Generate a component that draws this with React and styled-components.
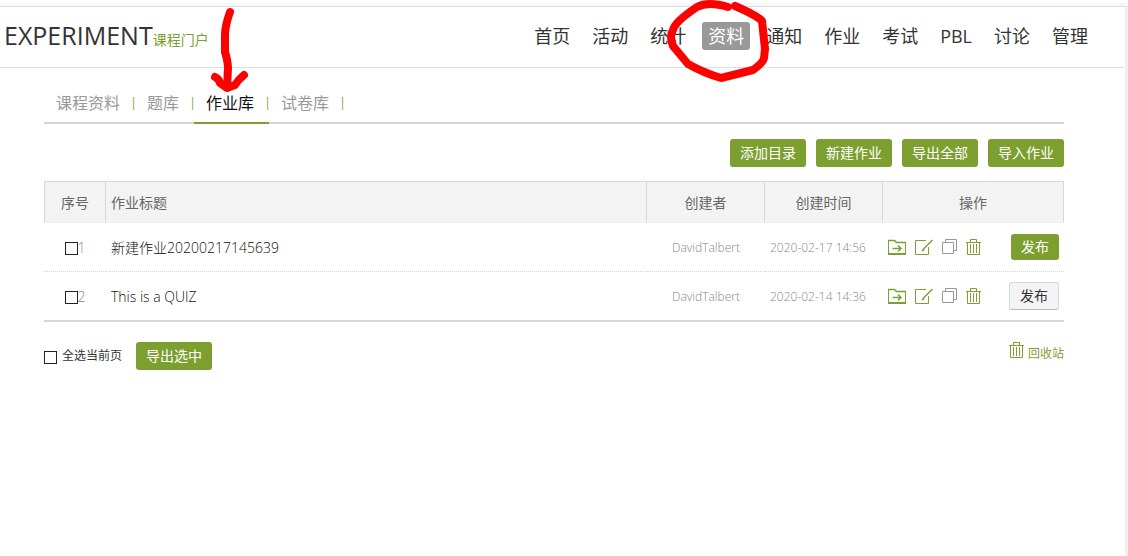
import React, { useState } from "react";
import styled, { createGlobalStyle, css } from "styled-components";

const GlobalStyle = createGlobalStyle`
  * {
    box-sizing: border-box;
  }

  html {
    min-height: 100%;
    background: linear-gradient(#fff 3px, #f7f7f7 3px, #f7f7f7 6px, #fff 6px);
  }

  body {
    margin: 0;
    font-family: "Open Sans", "Noto Sans CJK SC", sans-serif;
    font-size: 14px;
    font-weight: 400;
    color: #333;
  }

  button,
  input {
    font-family: inherit;
    font-weight: inherit;
  }
`;

const Page = styled.div`
  min-height: calc(100vh - 6px);
  margin-top: 6px;
  border-top: 1px solid #ddd;
  border-right: 3px solid #efefef;
  background-color: #fff;
`;

const Header = styled.header`
  display: flex;
  align-items: center;
  justify-content: space-between;
  height: 61px;
  padding: 0 30px 2px 4px;
  margin-right: 1px;
  border-bottom: 1px solid #e0e0e0;
`;

const Brand = styled.div`
  display: flex;
  align-items: baseline;
  padding-bottom: 2px;
`;

const Title = styled.h1`
  margin: 0;
  font-size: 25px;
  line-height: 36px;
  font-weight: 400;
  color: #333;
`;

const PortalLink = styled.a`
  font-size: 14px;
  color: #7c9f2f;
  text-decoration: none;
`;

const Nav = styled.nav`
  display: flex;
  gap: 10px;
`;

const NavLink = styled.a`
  position: relative;
  padding: 0 6px;
  border-radius: 3px;
  font-size: 18px;
  line-height: 28px;
  color: ${(props) => (props.$active ? "#fff" : "#333")};
  background-color: ${(props) => (props.$active ? "#999" : "transparent")};
  text-decoration: none;
  white-space: nowrap;
`;

const Circle = styled.svg`
  position: absolute;
  z-index: 2;
  left: -38px;
  top: -22px;
  pointer-events: none;
`;

const Arrow = styled.svg`
  position: absolute;
  z-index: 2;
  left: 11px;
  top: -78px;
  pointer-events: none;
`;

const Main = styled.main`
  padding: 15px 61px 0 44px;
`;

const Tabs = styled.ul`
  display: flex;
  margin: 0;
  padding: 0;
  list-style: none;
  border-bottom: 2px solid #d7d7d7;
`;

const Tab = styled.li`
  position: relative;
  display: flex;
  height: 41px;
  margin-bottom: -2px;
  line-height: 40px;
  border-bottom: 2px solid ${(props) => (props.$active ? "#7c9f2f" : "transparent")};
`;

const TabLink = styled.a`
  padding: 0 12px;
  font-size: 16px;
  color: ${(props) => (props.$active ? "#111" : "#999")};
  text-decoration: none;
`;

const Divider = styled.span`
  display: flex;
  justify-content: center;
  width: 3px;
  font-size: 12px;
  color: #7c9f2f;
`;

const Toolbar = styled.div`
  display: flex;
  justify-content: flex-end;
  gap: 10px;
  padding: 15px 0 14px;
`;

const Button = styled.button`
  height: 28px;
  padding: 0 10px;
  border: none;
  border-radius: 3px;
  font-size: 14px;
  line-height: 28px;
  font-weight: 400;
  color: #fff;
  background-color: #7c9f2f;
  cursor: pointer;
`;

const PublishButton = styled(Button)`
  ${(props) =>
    props.$published
      ? css`
          border: 1px solid #d7d7d7;
          border-bottom-color: #bbb;
          line-height: 26px;
          color: #333;
          background-color: #f4f4f4;
        `
      : css`
          height: 26px;
          line-height: 26px;
        `}
`;

const Table = styled.table`
  width: 100%;
  table-layout: fixed;
  border-collapse: separate;
  border-spacing: 0;
  border-bottom: 2px solid #d7d7d7;
`;

const HeadCell = styled.th`
  width: ${(props) => props.$width || "auto"};
  height: 42px;
  padding: 0 5px;
  border-top: 1px solid #d7d7d7;
  border-right: 1px solid #d7d7d7;
  border-bottom: 1px solid #eee;
  background-color: #f3f3f3;
  font-size: 14px;
  font-weight: 400;
  color: #666;
  text-align: ${(props) => props.$align || "center"};

  &:first-child {
    border-left: 1px solid #d7d7d7;
  }
`;

const Cell = styled.td`
  height: 48px;
  padding: 0 5px;
  font-size: ${(props) => (props.$small ? "12px" : "14px")};
  font-weight: 300;
  color: ${(props) => (props.$muted ? "#888" : "#111")};
  text-align: ${(props) => props.$align || "center"};
  white-space: nowrap;

  tr:not(:last-child) > & {
    height: 49px;
    border-bottom: 1px dotted #d7d7d7;
  }
`;

const CheckLabel = styled.label`
  display: inline-flex;
  align-items: center;
  gap: ${(props) => props.$gap || "0"};
  font-size: ${(props) => props.$size || "14px"};
  line-height: 20px;
  vertical-align: middle;
`;

const Checkbox = styled.input`
  appearance: none;
  width: 13px;
  height: 13px;
  margin: 2px 0 0;
  border: 1px solid #222;
  background-color: #fff;

  &:checked {
    background-color: #7c9f2f;
  }
`;

const Actions = styled.div`
  display: flex;
  align-items: center;
  justify-content: space-between;
`;

const IconGroup = styled.div`
  display: flex;
  gap: 9px;
`;

const IconButton = styled.button`
  display: flex;
  padding: 0;
  border: none;
  background: none;
  color: ${(props) => (props.$gray ? "#999" : "#7c9f2f")};
  cursor: pointer;
`;

const Footer = styled.div`
  display: flex;
  align-items: flex-start;
  justify-content: space-between;
  padding-top: 20px;
`;

const Selection = styled.div`
  display: flex;
  align-items: center;
  gap: 14px;
  color: #333;
`;

const RecycleLink = styled.a`
  display: flex;
  align-items: flex-start;
  gap: 4px;
  font-size: 12px;
  line-height: 24px;
  color: #7c9f2f;
  text-decoration: none;
`;

const svgProps = { fill: "none", stroke: "currentColor", "aria-hidden": true };

const FolderIcon = () => (
  <svg {...svgProps} width="18" height="16" viewBox="0 0 18 16">
    <path d="M.5 15V1.500h6l2 2h9V15" />
    <path d="M0 15h18" strokeWidth="2" />
    <path d="M0 1.500h6.500l2 2H18" strokeWidth="1.500" />
    <path d="M4.500 9.500h8.500M10 6.500l3 3-3 3" strokeWidth="1.500" />
  </svg>
);

const EditIcon = () => (
  <svg {...svgProps} width="18" height="16" viewBox="0 0 18 16">
    <path d="M11 1.500H.5v14h13V8" />
    <path d="M17.500 1L8 10.500" strokeWidth="1.500" />
    <path d="M8.500 9.500L7 12l2.500-1" />
  </svg>
);

const CopyIcon = () => (
  <svg {...svgProps} width="15" height="16" viewBox="0 0 15 16">
    <path d="M.5 3.500h11v11H.5zM3.500 3V.5h11v11H12" />
  </svg>
);

const TrashIcon = () => (
  <svg {...svgProps} width="15" height="16" viewBox="0 0 15 16">
    <path d="M0 3.500h15M4.500 3.500V.5h6v3M1.500 3.500v12h12v-12M4.500 5v9M7.500 5v9M10.500 5v9" />
  </svg>
);

const navItems = ["首页", "活动", "统计", "资料", "通知", "作业", "考试", "PBL", "讨论", "管理"];
const tabs = ["课程资料", "题库", "作业库", "试卷库"];
const tools = ["添加目录", "新建作业", "导出全部", "导入作业"];

const homeworks = [
  { id: 1, title: "新建作业20200217145639", author: "DavidTalbert", time: "2020-02-17 14:56", published: false },
  { id: 2, title: "This is a QUIZ", author: "DavidTalbert", time: "2020-02-14 14:36", published: true },
];

const App = () => {
  const [selected, setSelected] = useState([]);

  const toggle = (id) => {
    setSelected(selected.includes(id) ? selected.filter((s) => s !== id) : [...selected, id]);
  };

  const toggleAll = (e) => {
    setSelected(e.target.checked ? homeworks.map((h) => h.id) : []);
  };

  return (
    <Page>
      <GlobalStyle />
      <Header>
        <Brand>
          <Title>EXPERIMENT</Title>
          <PortalLink href="#portal">课程门户</PortalLink>
        </Brand>
        <Nav>
          {navItems.map((item) => (
            <NavLink key={item} href="#" $active={item === "资料"}>
              {item}
              {item === "资料" && (
                <Circle width="112" height="86" viewBox="664 0 112 86" fill="none" aria-hidden="true">
                  <path
                    d="M728 7Q708 1 697 7Q685 15 679 21Q674 26 673 30Q669 36 673 46L688 64Q704 73 721 78L753 70Q763 63 764 58L765 49L762 21Q758 16 735 6"
                    stroke="#f00"
                    strokeWidth="8"
                    strokeLinecap="round"
                    strokeLinejoin="round"
                  />
                </Circle>
              )}
            </NavLink>
          ))}
        </Nav>
      </Header>

      <Main>
        <Tabs>
          {tabs.map((tab) => (
            <Tab key={tab} $active={tab === "作业库"}>
              <TabLink href="#" $active={tab === "作业库"}>
                {tab}
              </TabLink>
              <Divider>|</Divider>
              {tab === "作业库" && (
                <Arrow width="45" height="92" viewBox="205 5 45 92" fill="none" aria-hidden="true">
                  <path
                    d="M230 12Q225 26 225 35V52Q228 62 228 68L227 88M215 77Q219 79 220 83L227 88L235 85Q238 80 244 75"
                    stroke="#f00"
                    strokeWidth="8"
                    strokeLinecap="round"
                    strokeLinejoin="round"
                  />
                </Arrow>
              )}
            </Tab>
          ))}
        </Tabs>

        <Toolbar>
          {tools.map((tool) => (
            <Button key={tool} type="button">
              {tool}
            </Button>
          ))}
        </Toolbar>

        <Table>
          <thead>
            <tr>
              <HeadCell $width="62px">序号</HeadCell>
              <HeadCell $align="left">作业标题</HeadCell>
              <HeadCell $width="118px">创建者</HeadCell>
              <HeadCell $width="118px">创建时间</HeadCell>
              <HeadCell $width="181px">操作</HeadCell>
            </tr>
          </thead>
          <tbody>
            {homeworks.map((h) => (
              <tr key={h.id}>
                <Cell $muted>
                  <CheckLabel>
                    <Checkbox
                      type="checkbox"
                      checked={selected.includes(h.id)}
                      onChange={() => toggle(h.id)}
                    />
                    {h.id}
                  </CheckLabel>
                </Cell>
                <Cell $align="left">{h.title}</Cell>
                <Cell $muted $small>{h.author}</Cell>
                <Cell $muted $small $align="left">{h.time}</Cell>
                <Cell>
                  <Actions>
                    <IconGroup>
                      <IconButton type="button" aria-label="移动">
                        <FolderIcon />
                      </IconButton>
                      <IconButton type="button" aria-label="编辑">
                        <EditIcon />
                      </IconButton>
                      <IconButton type="button" aria-label="复制" $gray>
                        <CopyIcon />
                      </IconButton>
                      <IconButton type="button" aria-label="删除">
                        <TrashIcon />
                      </IconButton>
                    </IconGroup>
                    <PublishButton type="button" $published={h.published}>
                      发布
                    </PublishButton>
                  </Actions>
                </Cell>
              </tr>
            ))}
          </tbody>
        </Table>

        <Footer>
          <Selection>
            <CheckLabel $size="12px" $gap="5px">
              <Checkbox
                type="checkbox"
                checked={selected.length === homeworks.length}
                onChange={toggleAll}
              />
              全选当前页
            </CheckLabel>
            <Button type="button">导出选中</Button>
          </Selection>
          <RecycleLink href="#recycle">
            <TrashIcon />
            回收站
          </RecycleLink>
        </Footer>
      </Main>
    </Page>
  );
};

export default App;
